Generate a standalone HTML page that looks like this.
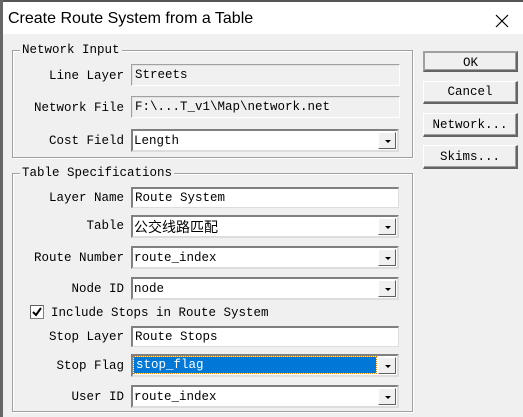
<!DOCTYPE html>
<html><head><meta charset="utf-8"><style>
*{box-sizing:border-box;margin:0;padding:0}
body{width:523px;height:417px;background:#f0f0f0;position:relative;overflow:hidden;font-family:"Liberation Mono","Noto Sans CJK SC",monospace;font-size:12.5px;color:#000}
.a{position:absolute}
.title{left:0;top:0;width:523px;height:34px;background:#fff;border-top:2px solid #555}
.title span{position:absolute;left:8px;top:8px;font-family:"Liberation Sans",sans-serif;font-size:16px}
.lb{position:absolute;text-align:right;width:124px;left:0;white-space:nowrap;margin-top:2px}
.grp{position:absolute;border:1px solid #a0a0a0;box-shadow:inset 1px 1px 0 #fff,1px 1px 0 #fff}
.leg{position:absolute;background:#f0f0f0;padding:0 2px;white-space:nowrap;margin-top:1px}
.ro{position:absolute;left:131px;width:269px;height:22px;border:1px solid #a0a0a0;border-right-color:#fff;border-bottom-color:#fff;box-shadow:inset 1px 1px 0 #e3e3e3;padding:3px 3px;background:#f0f0f0}
.ed{position:absolute;left:131px;width:268px;height:21px;border:1px solid #808080;border-top:2px solid #808080;border-left:2px solid #808080;border-right-color:#ddd;border-bottom-color:#ddd;background:#fff;padding:2px 2px 0;white-space:nowrap}
.cb{position:absolute;left:131px;width:268px;height:23px;border:2px solid #808080;border-right-color:#ddd;border-bottom-color:#ddd;background:#fff;padding:3px 1px 0;white-space:nowrap}
.dd{position:absolute;right:1px;top:1px;width:18px;height:17px;background:#f0f0f0;border:1px solid #fff;border-right-color:#606060;border-bottom-color:#606060}
.dd:after{content:"";position:absolute;left:6px;top:7px;border-left:3px solid transparent;border-right:3px solid transparent;border-top:3px solid #000}
.btn{position:absolute;left:423px;width:95px;text-align:center;background:#f0f0f0;border:1px solid #fff;border-right:2px solid #646464;border-bottom:2px solid #646464;box-shadow:inset -1px -1px 0 #a0a0a0}
</style></head><body>
<div class="a title"><span>Create Route System from a Table</span>
<svg class="a" style="left:495px;top:12px" width="14" height="14"><path d="M1 1L13 13M13 1L1 13" stroke="#000" stroke-width="1.2"/></svg></div>
<div class="a" style="left:0;top:0;width:3px;height:417px;background:#666"></div>

<div class="grp" style="left:12px;top:50px;width:401px;height:108px"></div>
<div class="leg" style="left:20px;top:42px">Network Input</div>
<div class="lb" style="top:67px">Line Layer</div>
<div class="ro" style="top:64px">Streets</div>
<div class="lb" style="top:99px">Network File</div>
<div class="ro" style="top:96px">F:\...T_v1\Map\network.net</div>
<div class="lb" style="top:132px">Cost Field</div>
<div class="cb" style="top:129px">Length<div class="dd"></div></div>

<div class="btn" style="top:51px;height:21px;line-height:20px;border:2px solid #646464;border-top-color:#a0a0a0;border-left-color:#a0a0a0">OK</div>
<div class="btn" style="top:81px;height:23px;line-height:21px">Cancel</div>
<div class="btn" style="top:113px;height:24px;line-height:22px">Network...</div>
<div class="btn" style="top:145px;height:24px;line-height:22px">Skims...</div>

<div class="grp" style="left:12px;top:173px;width:401px;height:239px"></div>
<div class="leg" style="left:20px;top:165px">Table Specifications</div>
<div class="lb" style="top:189px">Layer Name</div>
<div class="ed" style="top:187px">Route System</div>
<div class="lb" style="top:217px">Table</div>
<div class="cb" style="top:215px;font-family:'Noto Sans CJK SC',sans-serif;font-size:14px;padding-top:0">公交线路匹配<div class="dd"></div></div>
<div class="lb" style="top:249px">Route Number</div>
<div class="cb" style="top:246px">route_index<div class="dd"></div></div>
<div class="lb" style="top:280px">Node ID</div>
<div class="cb" style="top:277px">node<div class="dd"></div></div>
<div class="a" style="left:30px;top:305px;width:14px;height:14px;background:#fff;border:1px solid #808080;border-top-color:#606060;border-left-color:#606060"><svg width="12" height="12" class="a" style="left:0;top:0"><path d="M2 6L5 9L10 2" stroke="#000" stroke-width="2" fill="none"/></svg></div>
<div class="a" style="left:51px;top:306px">Include Stops in Route System</div>
<div class="lb" style="top:328px">Stop Layer</div>
<div class="ed" style="top:326px">Route Stops</div>
<div class="lb" style="top:357px">Stop Flag</div>
<div class="cb" style="top:354px;padding:1px"><div style="background:#0078d7;color:#fff;width:242px;height:16px;outline:1px dotted #e08000;padding-left:2px;line-height:17px">stop_flag</div><div class="dd"></div></div>
<div class="lb" style="top:388px">User ID</div>
<div class="cb" style="top:385px">route_index<div class="dd"></div></div>
</body></html>
